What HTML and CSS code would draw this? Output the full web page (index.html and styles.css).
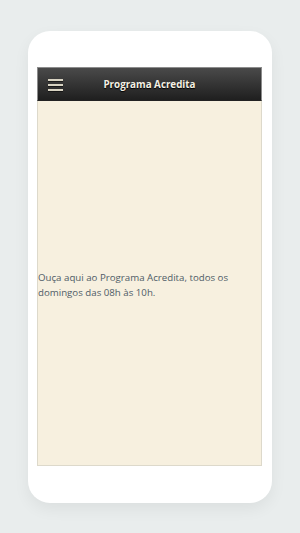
FILE: index.html
```html
<!DOCTYPE html>
<html lang="pt">
<head>
    <meta charset="UTF-8">
    <meta name="viewport" content="width=device-width, initial-scale=1.0">
    <title>Programa Acredita</title>
    <link rel="stylesheet" href="styles.css">
</head>
<body>

    <div class="phone">
        <div class="screen">
            <div class="header">
                <div class="menu-btn">
                    <span></span>
                    <span></span>
                    <span></span>
                </div>
                <div class="title">Programa Acredita</div>
            </div>
            <div class="content">
                <p>Ouça aqui ao Programa Acredita, todos os domingos das 08h às 10h.</p>
            </div>
        </div>
    </div>

</body>
</html>
```

FILE: styles.css
```css
body {
    font-family: "Open Sans", Arial, sans-serif;
    background-color: #e9eded;
    margin: 0;
    height: 533px;
    overflow: hidden;
}
.phone {
    background-color: #fff;
    width: 244px;
    height: 472px;
    margin: 31px 0 0 28px;
    border-radius: 22px;
    box-shadow: 0 6px 16px rgba(0, 0, 0, 0.06);
    padding: 36px 10px 37px 9px;
    box-sizing: border-box;
}
.screen {
    height: 100%;
    display: flex;
    flex-direction: column;
}
.header {
    height: 34px;
    background: linear-gradient(#4a4a4a, #1f1f1f);
    border: 1px solid #8c8c8c;
    border-bottom-color: #222;
    box-sizing: border-box;
    display: flex;
    align-items: center;
    position: relative;
}
.menu-btn {
    width: 15px;
    margin-left: 10px;
    margin-top: 1px;
    display: flex;
    flex-direction: column;
    gap: 3px;
}
.menu-btn span {
    display: block;
    height: 2px;
    background-color: #d8d3c2;
    box-shadow: 0 1px 0 rgba(0, 0, 0, 0.5);
}
.title {
    position: absolute;
    left: 0;
    right: 0;
    text-align: center;
    color: #f4f0e4;
    font-weight: bold;
    font-size: 9.8px;
    text-shadow: 0 1px 1px #000;
    pointer-events: none;
}
.content {
    flex: 1;
    background-color: #f7f0df;
    border: 1px solid #ddd9cb;
    border-top: none;
    display: flex;
    align-items: center;
}
.content p {
    margin: 0;
    padding: 3px 2px 0 0;
    font-size: 9.7px;
    line-height: 15px;
    color: #4f5c67;
}
```
